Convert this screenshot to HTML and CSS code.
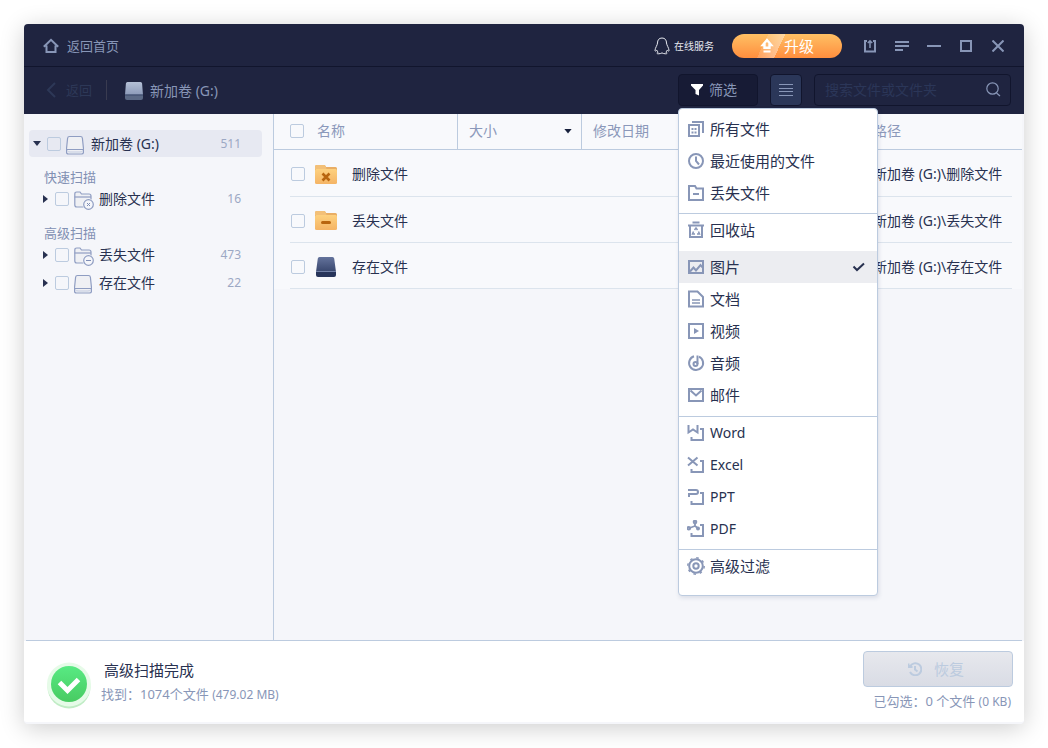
FILE: index.html
```html
<!DOCTYPE html>
<html lang="zh-CN">
<head>
<meta charset="utf-8">
<meta name="viewport" content="width=device-width, initial-scale=1">
<title>新加卷 (G:)</title>
<link rel="stylesheet" href="styles.css">
</head>
<body>
<svg class="defs" aria-hidden="true">
  <defs>
    <linearGradient id="g-folder" x1="0" y1="0" x2="0" y2="1"><stop offset="0" stop-color="#fdd17f"/><stop offset="1" stop-color="#f5b465"/></linearGradient>
    <linearGradient id="g-light" x1="0" y1="0" x2="0" y2="1"><stop offset="0" stop-color="#b4c0d6"/><stop offset="1" stop-color="#8c9ab8"/></linearGradient>
    <linearGradient id="g-dark" x1="0" y1="0" x2="0" y2="1"><stop offset="0" stop-color="#64739c"/><stop offset="1" stop-color="#38466d"/></linearGradient>
    <linearGradient id="g-green" x1="0" y1="0" x2="0" y2="1"><stop offset="0" stop-color="#58ea83"/><stop offset="1" stop-color="#48cb62"/></linearGradient>
    <symbol id="i-disk" viewBox="0 0 18 20"><path d="M3.500 1.500h11q1.700 0 1.900 1.700l1.100 10.500V17q0 2-2 2h-13q-2 0-2-2v-3.300l1.100-10.500Q1.800 1.500 3.500 1.500z" fill="#eff0f4" stroke="#8f9dc2" stroke-width="1.200"/><path d="M1 14.500h16" stroke="#8f9dc2"/><path d="M1 15.500q1 1.500 3 1.500h10q2 0 3-1.500" fill="none" stroke="#c2cbe0"/></symbol>
    <symbol id="i-folder" viewBox="0 0 20 20"><path d="M.8 15V4q0-2 2-2H6l1.500 2H15q2 0 2 2V15q0 2-2 2H2.800q-2 0-2-2z" fill="#eff0f4" stroke="#8f9dc2" stroke-width="1.200"/><path d="M.5 7H17" stroke="#8f9dc2" stroke-width="1.200"/><circle cx="14.500" cy="14.500" r="6" fill="#f5f6fa"/><circle cx="14.500" cy="14.500" r="4.800" fill="#f5f6fa" stroke="#8f9dc2" stroke-width="1.200"/></symbol>
    <symbol id="i-gold" viewBox="0 0 22 19"><path d="M0 5V1.500Q0 0 1.500 0H9q1 0 1.500 1l.5 1H20.500q1.500 0 1.500 1.500V9H0z" fill="#e9ae65"/><path d="M0 2V1.500Q0 0 1.500 0H9q1 0 1.500 1l1 3H0z" fill="#f3c078"/><path d="M0 5.500Q0 4 1.500 4h19Q22 4 22 5.500v12q0 1.500-1.500 1.500h-19Q0 19 0 17.500z" fill="url(#g-folder)"/></symbol>
    <symbol id="i-corner" viewBox="0 0 18 18"><path d="M13 5h3v11H4.500v-3" fill="none" stroke="#8896b7" stroke-width="2"/></symbol>
  </defs>
</svg>

<div class="window">
  <header class="header">
    <div class="titlebar">
      <a class="home" href="#">
        <svg width="16" height="16" viewBox="0 0 16 16" fill="none" stroke="currentColor" stroke-width="2"><path d="M.8 8.800 8 1.800l7.200 7M3.500 7.500v6.500h9V7.500"/></svg>
        <span>返回首页</span>
      </a>
      <a class="service" href="#">
        <svg width="16" height="18" viewBox="0 0 16 18" fill="none" stroke="currentColor"><path d="M8 1C5 1 3.500 3 3.500 6c0 2-2.500 5-2.500 7.500 0 1 .8.800 1.700-.5.300 1 .8 1.700 1.500 2.200-2 .4-1.500 1.600 0 1.600 1.600 0 2.800-.3 3.800-.9 1 .6 2.200.9 3.800.9 1.500 0 2-1.200 0-1.600.7-.5 1.200-1.200 1.500-2.200.9 1.300 1.700 1.500 1.700.5 0-2.500-2.500-5.500-2.500-7.500C12.500 3 11 1 8 1z"/></svg>
        <span>在线服务</span>
      </a>
      <button class="upgrade" type="button">
        <svg width="14" height="15" viewBox="0 0 14 15" fill="none" stroke="#fff" stroke-width="2.400"><path d="M4.500 9.800V7H2.800L7 2l4.200 5H9.500v2.800z"/><path d="M3.500 13.500h7" stroke-width="2"/></svg>
        <span>升级</span>
      </button>
      <div class="controls">
        <button type="button" aria-label="导出"><svg width="14" height="14" viewBox="0 0 14 14" fill="none" stroke="currentColor" stroke-width="2"><path d="M4 2H2v10.500h10V2h-2"/><path d="M7 9V2M4.800 4 7 1.800 9.200 4" stroke-width="1.500"/></svg></button>
        <button type="button" aria-label="菜单"><svg width="14" height="12" viewBox="0 0 14 12" stroke="currentColor" stroke-width="2"><path d="M0 2h14M0 6h14M0 10h8"/></svg></button>
        <button type="button" aria-label="最小化"><svg width="14" height="12" viewBox="0 0 14 12" stroke="currentColor" stroke-width="2"><path d="M0 6h14"/></svg></button>
        <button type="button" aria-label="最大化"><svg width="12" height="12" viewBox="0 0 12 12" fill="none" stroke="currentColor" stroke-width="2"><path d="M1 1h10v10H1z"/></svg></button>
        <button type="button" aria-label="关闭"><svg width="12" height="12" viewBox="0 0 12 12" stroke="currentColor" stroke-width="2"><path d="m.5.5 11 11m0-11-11 11"/></svg></button>
      </div>
    </div>

    <div class="toolbar">
      <button class="back" type="button" disabled>
        <svg width="10" height="16" viewBox="0 0 10 16" fill="none" stroke="currentColor" stroke-width="2"><path d="M9 1 2 8l7 7"/></svg>
        <span>返回</span>
      </button>
      <div class="location">
        <svg width="18" height="18" viewBox="0 0 18 18"><path d="M2.500 0h13q1.500 0 1.600 1.500L18 13H0L.9 1.500Q1 0 2.500 0z" fill="url(#g-light)"/><path d="M0 12.500h18V16q0 2-2 2H2q-2 0-2-2z" fill="#5b6985"/><path d="M0 13h18" stroke="#3d4a6c"/></svg>
        <span>新加卷 (G:)</span>
      </div>
      <div class="filter">
        <button class="filter-toggle" type="button" aria-haspopup="menu" aria-expanded="true">
          <svg width="12" height="12" viewBox="0 0 12 12" fill="#fff"><path d="M0 0h12v1.500L8 6v5.500L4.500 10V6L0 1.500z"/></svg>
          <span>筛选</span>
        </button>
        <div class="menu" role="menu">
          <div class="group">
            <button type="button" role="menuitem"><svg viewBox="0 0 18 18"><path d="M2 5h10v11H2z"/><path d="M5 2h11v11"/><path d="M4.500 9h5M4.500 12.500h5" stroke-dasharray="2 1"/></svg>所有文件</button>
            <button type="button" role="menuitem"><svg viewBox="0 0 18 18"><circle cx="9" cy="9" r="7"/><path d="M9 4.500V9l3 3.500"/></svg>最近使用的文件</button>
            <button type="button" role="menuitem"><svg viewBox="0 0 18 18"><path d="M2 16V2h6l1.500 2.500H16V16z"/><path d="M6 10h6"/></svg>丢失文件</button>
          </div>
          <div class="group spaced">
            <button type="button" role="menuitem"><svg viewBox="0 0 18 18"><path d="M1 4.500h16M5.500 1.500h7M3 5v11h12V5"/><path d="m7.500 9 1.500-2 1.500 2M6.500 10.500 5.500 13h2.500M11.500 10.500l1 2.500H10" stroke-width="1.500"/></svg>回收站</button>
            <button class="active" type="button" role="menuitem"><svg viewBox="0 0 18 18"><path d="M2 3h14v12H2z"/><path d="m3 13.500 3.500-4 2.500 3 4.500-5.500 2 2.500"/></svg>图片<svg class="tick" viewBox="0 0 14 10"><path d="m1.500 4.500 3.500 3.500L12 1.500"/></svg></button>
            <button type="button" role="menuitem"><svg viewBox="0 0 18 18"><path d="M2 1.500h8.500L16 7v9.500H2z"/><path d="M5 10h8M5 13h8" stroke-width="1.500"/></svg>文档</button>
            <button type="button" role="menuitem"><svg viewBox="0 0 18 18"><path d="M2 2h14v14H2z"/><path d="M7 6v6l5-3z" fill="#8896b7" stroke="none"/></svg>视频</button>
            <button type="button" role="menuitem"><svg viewBox="0 0 18 18"><path d="M7 2.300a7 7 0 1 0 5 .3"/><circle cx="8.500" cy="10" r="2"/><path d="M10.500 10V1.500"/></svg>音频</button>
            <button type="button" role="menuitem"><svg viewBox="0 0 18 18"><path d="M2 3h14v12H2z"/><path d="m3.500 4.500 5.500 5 5.500-5"/></svg>邮件</button>
          </div>
          <div class="group latin">
            <button type="button" role="menuitem"><svg viewBox="0 0 18 18"><use href="#i-corner"/><path d="M1.500 1v7.500L6 5.500l4.500 3V1"/></svg>Word</button>
            <button type="button" role="menuitem"><svg viewBox="0 0 18 18"><use href="#i-corner"/><path d="m1 1.500 9.500 8m0-8-9.500 8"/></svg>Excel</button>
            <button type="button" role="menuitem"><svg viewBox="0 0 18 18"><use href="#i-corner"/><path d="M1 2h8q2 0 2 2t-2 2H2v3"/></svg>PPT</button>
            <button type="button" role="menuitem"><svg viewBox="0 0 18 18"><use href="#i-corner"/><path d="M8 2.500V6l3.500 2.500M8 6 2.500 8" stroke-width="1.800"/><circle cx="8" cy="2" r="1.300"/><circle cx="1.800" cy="8.200" r="1.300"/><circle cx="11" cy="8.500" r="1"/></svg>PDF</button>
          </div>
          <div class="group">
            <button type="button" role="menuitem"><svg viewBox="0 0 18 18"><circle cx="9" cy="9" r="6.800"/><circle cx="9" cy="9" r="8.200" stroke-width="1.500" stroke-dasharray="2.500 3.940"/><circle cx="9" cy="9" r="2.700"/></svg>高级过滤</button>
          </div>
        </div>
      </div>
      <button class="view" type="button" aria-label="列表视图"><svg width="14" height="14" viewBox="0 0 14 14" stroke="#8896b7"><path d="M0 1.500h14M0 5.500h14M0 8.500h14M0 12.500h14"/></svg></button>
      <div class="search">
        <input type="search" aria-label="搜索" placeholder="搜索文件或文件夹">
        <svg width="15" height="15" viewBox="0 0 15 15" fill="none" stroke="#8896b7" stroke-width="1.200"><circle cx="6.500" cy="6.500" r="5.700"/><path d="m10.500 11 3.500 3"/></svg>
      </div>
    </div>
  </header>

  <div class="content">
    <nav class="sidebar" aria-label="扫描结果">
      <div class="node root">
        <button class="twist open" type="button" aria-label="折叠"></button>
        <input type="checkbox" id="n0">
        <svg width="18" height="20"><use href="#i-disk"/></svg>
        <label for="n0">新加卷 (G:)</label><span class="count">511</span>
      </div>
      <h2>快速扫描</h2>
      <div class="node">
        <button class="twist" type="button" aria-label="展开"></button>
        <input type="checkbox" id="n1">
        <svg width="20" height="20" viewBox="0 0 20 20"><use href="#i-folder"/><path d="m13 13 3 3m0-3-3 3" stroke="#7f8eb5"/></svg>
        <label for="n1">删除文件</label><span class="count">16</span>
      </div>
      <h2>高级扫描</h2>
      <div class="node">
        <button class="twist" type="button" aria-label="展开"></button>
        <input type="checkbox" id="n2">
        <svg width="20" height="20" viewBox="0 0 20 20"><use href="#i-folder"/><path d="M12 14.500h5" stroke="#7f8eb5"/></svg>
        <label for="n2">丢失文件</label><span class="count">473</span>
      </div>
      <div class="node">
        <button class="twist" type="button" aria-label="展开"></button>
        <input type="checkbox" id="n3">
        <svg width="20" height="20" viewBox="0 0 20 20"><use href="#i-disk" width="18" height="20"/></svg>
        <label for="n3">存在文件</label><span class="count">22</span>
      </div>
    </nav>

    <main class="files">
      <table>
        <colgroup><col class="c-name"><col class="c-size"><col><col class="c-path"></colgroup>
        <thead>
          <tr>
            <th scope="col"><div class="name"><input type="checkbox" id="all"><label for="all">名称</label></div></th>
            <th scope="col"><div class="sort"><span>大小</span><i class="arrow"></i></div></th>
            <th scope="col">修改日期</th>
            <th scope="col">路径</th>
          </tr>
        </thead>
        <tbody>
          <tr>
            <td><div class="name"><input type="checkbox" id="f1"><svg width="22" height="19" viewBox="0 0 22 19"><use href="#i-gold"/><path d="m7.500 8.500 7 7m0-7-7 7" stroke="#b8650f" stroke-width="2.600"/></svg><label for="f1">删除文件</label></div></td>
            <td></td><td></td><td>新加卷 (G:)\删除文件</td>
          </tr>
          <tr>
            <td><div class="name"><input type="checkbox" id="f2"><svg width="22" height="19" viewBox="0 0 22 19"><use href="#i-gold"/><path d="M7.500 11.500h7" stroke="#b8650f" stroke-width="3" stroke-linecap="round"/></svg><label for="f2">丢失文件</label></div></td>
            <td></td><td></td><td>新加卷 (G:)\丢失文件</td>
          </tr>
          <tr>
            <td><div class="name"><input type="checkbox" id="f3"><svg width="22" height="20" viewBox="0 0 22 20"><path d="M4.500 0h13q1.500 0 1.700 1.500L21 15H1L2.800 1.500Q3 0 4.500 0z" fill="url(#g-dark)"/><path d="M1 15h20v3q0 2-2 2H3q-2 0-2-2z" fill="#27345a"/><path d="M1 14.500h20" stroke="#7180a6"/></svg><label for="f3">存在文件</label></div></td>
            <td></td><td></td><td>新加卷 (G:)\存在文件</td>
          </tr>
        </tbody>
      </table>
    </main>
  </div>

  <footer class="footer">
    <svg class="badge" width="44" height="48" viewBox="0 0 44 48"><circle cx="22" cy="25" r="21.500" fill="#c0ecc5"/><circle cx="22" cy="22.500" r="22" fill="#e6fbe8"/><circle cx="22" cy="22" r="18" fill="url(#g-green)"/><path d="m12.500 20.500 8 8 11-11" fill="none" stroke="#fff" stroke-width="5"/></svg>
    <div class="status">
      <p class="done">高级扫描完成</p>
      <p class="found">找到：1074个文件 <span class="size">(479.02 MB)</span></p>
    </div>
    <div class="action">
      <button class="recover" type="button" disabled>
        <svg width="14" height="14" viewBox="0 0 14 14" fill="none" stroke="currentColor" stroke-width="2"><path d="M2 4.500A6 6 0 1 1 2 10M.5 1.500v3.500h4M7 4v3.500l2.500 2"/></svg>
        <span>恢复</span>
      </button>
      <p class="chosen">已勾选：0 个文件 <span class="size">(0 KB)</span></p>
    </div>
  </footer>
</div>
</body>
</html>
```
FILE: styles.css
```css
* {
  box-sizing: border-box;
}

body {
  margin: 0;
  padding: 24px;
  min-height: 100vh;
  display: flex;
  background: #fff;
  color: #283150;
  font: 14px/20px "Noto Sans", "Noto Sans CJK SC", sans-serif;
}

button,
input {
  margin: 0;
  font: inherit;
}

button {
  padding: 0;
  border: 0;
  background: none;
  color: inherit;
}

a {
  color: inherit;
  text-decoration: none;
}

p,
h2 {
  margin: 0;
}

svg {
  display: block;
  flex: none;
}

.defs {
  position: absolute;
  width: 0;
  height: 0;
}

.window {
  flex: 1;
  min-width: 0;
  display: flex;
  flex-direction: column;
  border-radius: 5px;
  background: #f5f6fa;
  box-shadow: 0 4px 24px rgba(0, 0, 0, 0.2);
}

/* Header */

.header {
  border-radius: 4px 4px 0 0;
  background: #1f2440;
  color: #8896b7;
}

.titlebar {
  display: flex;
  align-items: center;
  height: 43px;
  padding: 1px 10px 0 19px;
  border-bottom: 1px solid #11152d;
}

.home {
  display: flex;
  align-items: center;
  gap: 8px;
  margin-right: auto;
  font-size: 13px;
}

.service {
  display: flex;
  align-items: center;
  gap: 4px;
  margin-right: 18px;
  color: #e6e8ef;
  font-size: 10px;
}

.upgrade {
  display: flex;
  align-items: center;
  justify-content: center;
  gap: 10px;
  width: 110px;
  height: 24px;
  margin-right: 12px;
  border-radius: 12px;
  background:
    linear-gradient(116deg, transparent 30%, rgba(255, 255, 255, 0.15) 30%, rgba(255, 255, 255, 0.4) 44%, transparent 44%),
    linear-gradient(#ffc064, #ff8e3e);
  color: #fff;
  font-size: 15px;
}

.controls {
  display: flex;
}

.controls button {
  display: grid;
  place-items: center;
  width: 32px;
  height: 32px;
}

.toolbar {
  display: flex;
  align-items: center;
  gap: 12px;
  height: 47px;
  padding: 0 13px 2px 22px;
}

.back {
  display: flex;
  align-items: center;
  gap: 10px;
  height: 20px;
  padding-right: 14px;
  border-right: 1px solid #393b50;
  color: #2d3857;
  font-size: 13px;
}

.location {
  display: flex;
  align-items: center;
  gap: 7px;
  margin-right: auto;
  padding: 2px 0 0 6px;
}

.filter {
  position: relative;
}

.filter-toggle {
  display: flex;
  align-items: center;
  gap: 6px;
  width: 80px;
  height: 32px;
  padding-left: 12px;
  border: 1px solid #11152d;
  border-radius: 4px;
  background: #171b35;
}

.view {
  display: grid;
  place-items: center;
  width: 32px;
  height: 32px;
  border: 1px solid #11152d;
  border-radius: 4px;
  background: #2b3759;
}

.search {
  display: flex;
  align-items: center;
  width: 197px;
  height: 32px;
  padding: 0 9px 0 10px;
  border: 1px solid #11152d;
  border-radius: 4px;
}

.search input {
  flex: 1;
  min-width: 0;
  padding: 0;
  border: 0;
  outline: 0;
  background: none;
  color: #8896b7;
}

.search input::placeholder {
  color: #2b3658;
  opacity: 1;
}

/* Filter menu */

.menu {
  position: absolute;
  z-index: 2;
  top: calc(100% + 2px);
  left: 0;
  width: 200px;
  padding: 4px 0 13px;
  border: 1px solid #bccbdf;
  border-radius: 4px;
  background: #fff;
  box-shadow: 1px 2px 4px rgba(60, 70, 110, 0.14);
  color: #283150;
  font-size: 15px;
}

.group + .group {
  margin-top: 4px;
  border-top: 1px solid #bccbdf;
}

.menu button {
  display: flex;
  align-items: center;
  gap: 5px;
  width: 100%;
  height: 32px;
  padding: 0 11px 0 8px;
}

.spaced button:first-child {
  margin-bottom: 5px;
}

.group + .latin {
  margin-top: 5px;
  font-size: 14px;
}

.menu .active {
  background: #ecedf1;
}

.menu svg {
  width: 18px;
  height: 18px;
  fill: none;
  stroke: #8896b7;
  stroke-width: 2;
}

.menu .tick {
  width: 14px;
  height: 10px;
  margin-left: auto;
  stroke: #283150;
}

/* Content */

.content {
  flex: 1;
  display: flex;
  margin: 0 2px;
  border-bottom: 1px solid #bccbdf;
}

.sidebar {
  flex: none;
  width: 248px;
  padding: 16px 11px 16px 3px;
  border-right: 1px solid #bccbdf;
}

.sidebar h2 {
  margin-top: 12px;
  padding-left: 15px;
  color: #8290b3;
  font-size: 13px;
  font-weight: 400;
  line-height: 16px;
}

input[type="checkbox"] {
  appearance: none;
  flex: none;
  width: 14px;
  height: 14px;
  border: 1px solid #bccbdf;
  border-radius: 2px;
}

.node {
  display: flex;
  align-items: center;
  height: 28px;
  padding: 0 21px 0 12px;
}

.node.root {
  height: 27px;
  padding-left: 4px;
  border-radius: 4px;
  background: #e7e9f2;
}

.twist {
  width: 14px;
  height: 14px;
  flex: none;
}

.twist::before {
  content: "";
  display: block;
  width: 5px;
  height: 8px;
  margin-left: 2px;
  background: #283150;
  clip-path: polygon(0 0, 100% 50%, 0 100%);
}

.twist.open::before {
  width: 8px;
  height: 5px;
  margin-left: 0;
  clip-path: polygon(0 0, 100% 0, 50% 100%);
}

.node svg {
  margin: 2px 5px 0;
}

.root svg {
  margin-right: 7px;
}

.count {
  margin-left: auto;
  color: #9ca8c4;
  font-size: 12px;
}

/* File table */

.files {
  flex: 1;
  min-width: 0;
}

table {
  width: 100%;
  table-layout: fixed;
  border-spacing: 0;
}

.c-name {
  width: 184px;
}

.c-size {
  width: 124px;
}

.c-path {
  width: 160px;
}

th {
  height: 36px;
  padding: 0 9px 1px 11px;
  border-right: 1px solid #bccbdf;
  border-bottom: 1px solid #bccbdf;
  background: #f8f9fc;
  color: #8b98ba;
  font-weight: 400;
  text-align: left;
}

th:first-child,
td:first-child {
  padding-left: 16px;
}

th:last-child {
  border-right: 0;
}

.name {
  display: flex;
  align-items: center;
}

th .name {
  gap: 13px;
}

td svg {
  margin: 0 15px 0 10px;
}

.sort {
  display: flex;
  align-items: center;
  justify-content: space-between;
}

.arrow {
  width: 8px;
  height: 5px;
  background: #17203c;
  clip-path: polygon(0 0, 100% 0, 50% 100%);
}

td {
  height: 46px;
  padding: 1px 0 0 11px;
  background: linear-gradient(#dce4ed, #dce4ed) 0 100% / 100% 1px no-repeat #f8f9fc;
  white-space: nowrap;
}

tr:first-child td {
  height: 47px;
}

td:first-child {
  padding-left: 17px;
  background-position: 16px 100%;
}

td:last-child {
  background-position: -10px 100%;
}

/* Footer */

.footer {
  display: flex;
  align-items: center;
  height: 83px;
  padding: 1px 11px 0 23px;
  border-bottom: 2px solid #f5f6fa;
  border-radius: 0 0 4px 4px;
  background: #fff;
}

.badge {
  margin-top: 8px;
}

.status {
  margin: 0 auto 0 10px;
}

.done {
  padding-left: 3px;
  font-size: 15px;
  line-height: 24px;
}

.found,
.chosen {
  color: #8896b7;
  font-size: 13px;
  line-height: 24px;
}

.chosen {
  padding-right: 2px;
}

.size {
  font-size: 12px;
}

.action {
  display: flex;
  flex-direction: column;
  align-items: flex-end;
  gap: 2px;
}

.recover {
  display: flex;
  align-items: center;
  justify-content: center;
  gap: 12px;
  width: 150px;
  height: 36px;
  padding-right: 4px;
  border: 1px solid #bccbdf;
  border-radius: 4px;
  background: linear-gradient(#e7e8ed, #d9dce5);
  color: #bccbdf;
  font-size: 15px;
}
```
